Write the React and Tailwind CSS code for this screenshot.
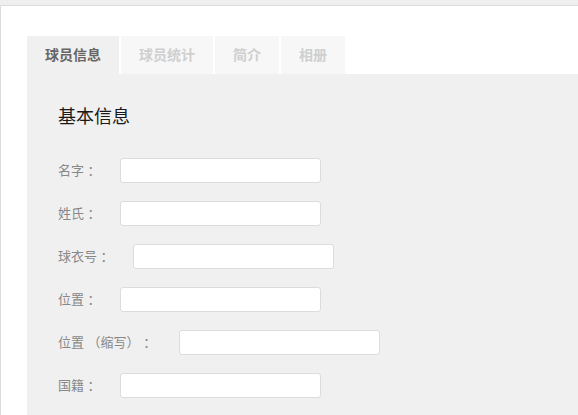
import React from "react";

const tabs = [
  { name: "球员信息", active: true },
  { name: "球员统计" },
  { name: "简介" },
  { name: "相册" },
];

const fields = ["名字 ：", "姓氏 ：", "球衣号 ：", "位置 ：", "位置 （缩写） ：", "国籍 ："];

export default function App() {
  return (
    <div
      className="min-h-[415px] bg-[#efefef] pt-[5px]"
      style={{ fontFamily: '"Liberation Sans", "Noto Sans CJK SC", sans-serif' }}
    >
      <div className="min-h-[410px] border-t border-l border-[#dcdcdc] bg-white pt-[30px] pl-[26px]">
        {/* tabs */}
        <div className="flex gap-[2px]">
          {tabs.map(t => (
            <div
              key={t.name}
              className={
                t.active
                  ? "flex h-[38px] items-center bg-[#f0f0f0] px-[18px] text-[14px] font-bold text-[#666]"
                  : "flex h-[38px] items-center bg-[#f7f7f7] px-[18px] text-[14px] font-bold text-[#cfcfcf]"
              }
            >
              {t.name}
            </div>
          ))}
        </div>

        {/* panel */}
        <div className="min-h-[342px] bg-[#f0f0f0] pt-[30px] pl-[31px]">
          <h2 className="text-[18px] leading-[27px] text-[#1a1a1a]">基本信息</h2>
          <div className="mt-[27px] flex flex-col gap-[18px]">
            {fields.map((f, i) => (
              <div key={i} className="flex items-center">
                <span
                  className={
                    i === 4
                      ? "mr-[23px] whitespace-pre text-[13px] text-[#888]"
                      : "mr-[19px] whitespace-pre text-[13px] text-[#888]"
                  }
                >
                  {f}
                </span>
                <input
                  type="text"
                  className="h-[25px] w-[201px] rounded-[3px] border border-[#dcdcdc] bg-white outline-none"
                />
              </div>
            ))}
          </div>
        </div>
      </div>
    </div>
  );
}
